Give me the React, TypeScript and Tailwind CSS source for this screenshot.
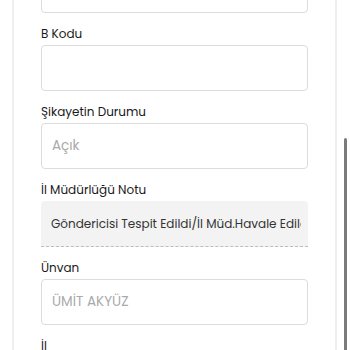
import React from "react";

const font = { fontFamily: "Poppins, 'Open Sans', 'Noto Sans', sans-serif" };

function Field({ label, placeholder }: { label: string; placeholder?: string }) {
  return (
    <div className="mb-[10px]">
      <div className="pt-[1px] pb-[2px] text-[12px] leading-[19px] text-[#1a1a1a]">{label}</div>
      <div className="h-[46px] rounded-[4px] border border-[#dcdcdc] bg-white flex items-center px-[10px] text-[13.5px] text-[#aaaaaa]">
        {placeholder}
      </div>
    </div>
  );
}

export default function App() {
  return (
    <div className="relative h-[350px] w-[350px] overflow-hidden bg-white" style={font}>
      <div className="mx-[12px] mt-[-55px] w-[325px] border-x-2 border-[#efefef] bg-white px-[27px] pb-4">
        <Field label="A Kodu" />
        <Field label="B Kodu" />
        <Field label="Şikayetin Durumu" placeholder="Açık" />
        <div className="mb-[10px]">
          <div className="pt-[1px] pb-[2px] text-[12px] leading-[19px] text-[#1a1a1a]">İl Müdürlüğü Notu</div>
          <div className="h-[46px] rounded-t-[4px] border-b border-dashed border-[#bdbdbd] bg-[#f3f3f3] flex items-center pl-[10px] pr-[7px] text-[12px] text-[#333]">
            <div className="flex-1 overflow-hidden whitespace-nowrap">Göndericisi Tespit Edildi/İl Müd.Havale Edildi</div>
          </div>
        </div>
        <Field label="Ünvan" placeholder="ÜMİT AKYÜZ" />
        <Field label="İl" />
      </div>
      <div className="absolute left-[344px] top-[138px] h-[220px] w-[3px] rounded-full bg-[#7a7a7a]" />
    </div>
  );
}
